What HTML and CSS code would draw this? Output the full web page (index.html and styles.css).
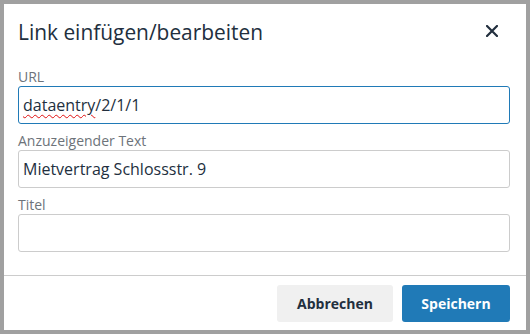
FILE: index.html
```html
<!DOCTYPE html>
<html lang="de">
<head>
<meta charset="utf-8">
<title>Link einfügen/bearbeiten</title>
<link rel="stylesheet" href="styles.css">
</head>
<body>
<div class="dialog">
  <div class="header">
    <div class="title">Link einfügen/bearbeiten</div>
    <button class="close" aria-label="Schließen">
      <svg width="12" height="12" viewBox="0 0 12 12"><path d="M1 1 L11 11 M11 1 L1 11" stroke="#222f3e" stroke-width="2.2" stroke-linecap="square" fill="none"/></svg>
    </button>
  </div>
  <div class="body">
    <div class="field">
      <div class="label">URL</div>
      <div class="input focused"><span class="misspelled">dataentry</span>/2/1/1</div>
    </div>
    <div class="field">
      <div class="label">Anzuzeigender Text</div>
      <div class="input">Mietvertrag Schlossstr. 9</div>
    </div>
    <div class="field">
      <div class="label">Titel</div>
      <div class="input"></div>
    </div>
  </div>
  <div class="footer">
    <button class="btn secondary">Abbrechen</button>
    <button class="btn primary">Speichern</button>
  </div>
</div>
</body>
</html>
```

FILE: styles.css
```css
html, body {
  margin: 0;
  padding: 0;
}
body {
  background: #a0a0a0;
  padding: 4px 0 0 4px;
  width: 530px;
  height: 334px;
  box-sizing: border-box;
  overflow: hidden;
  font-family: "Open Sans", "Noto Sans", sans-serif;
  color: #222f3e;
}
.dialog {
  width: 522px;
  height: 326px;
  background: #fff;
  display: flex;
  flex-direction: column;
  box-sizing: border-box;
}
.header {
  display: flex;
  align-items: center;
  justify-content: space-between;
  padding: 14px 16px 0 14px;
  height: 28px;
  box-sizing: content-box;
}
.title {
  font-size: 20.9px;
  line-height: 28px;
  color: #222f3e;
}
.close {
  border: 0;
  background: none;
  padding: 0;
  margin: 0 12px 2px 0;
  width: 12px;
  height: 12px;
  display: flex;
}
.body {
  padding: 21px 16px 0 14px;
  display: flex;
  flex-direction: column;
  gap: 7px;
  flex: 1;
}
.field {
  display: flex;
  flex-direction: column;
}
.label {
  font-size: 14px;
  line-height: 19px;
  height: 19px;
  color: #6d737a;
}
.input {
  height: 38px;
  box-sizing: border-box;
  border: 1px solid #cccccc;
  border-radius: 3px;
  padding: 0 4px;
  font-size: 16px;
  line-height: 36px;
  color: #222f3e;
  white-space: nowrap;
}
.input.focused {
  border-color: #207ab7;
}
.misspelled {
  text-decoration: underline wavy #e01010;
  text-decoration-thickness: 1.3px;
  text-underline-offset: 3px;
}
.footer {
  border-top: 1px solid #cccccc;
  padding: 9px 16px 8px 14px;
  display: flex;
  justify-content: flex-end;
  gap: 9px;
}
.btn {
  height: 37px;
  border: 0;
  border-radius: 3px;
  font-family: "Open Sans", "Noto Sans", sans-serif;
  font-size: 14px;
  font-weight: 700;
  padding: 0;
}
.secondary {
  width: 116px;
  background: #f0f0f0;
  color: #222f3e;
}
.primary {
  width: 108px;
  background: #207ab7;
  color: #fff;
}
```
